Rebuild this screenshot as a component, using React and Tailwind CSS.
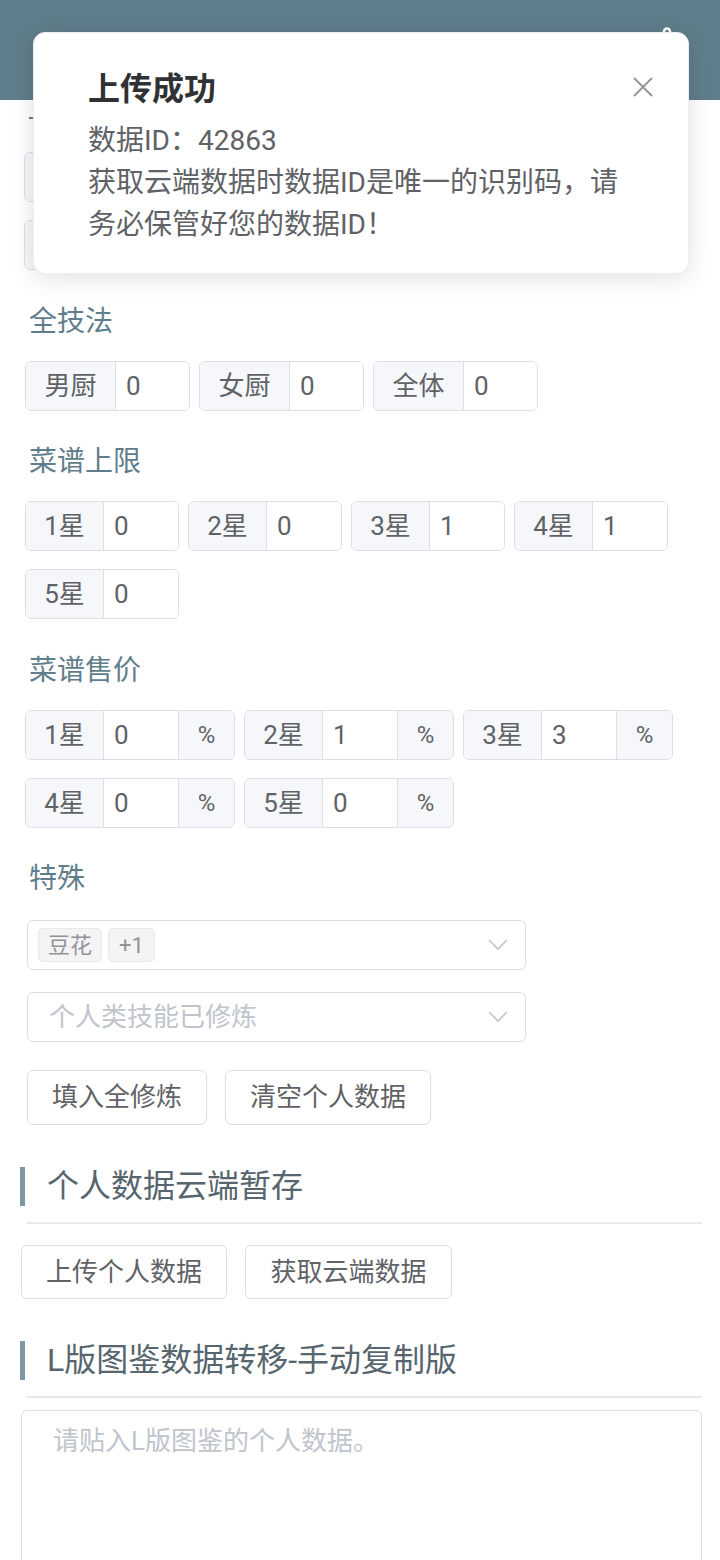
import React from 'react';
import { Settings } from 'lucide-react';

const Group = ({ label, value, suffix, lw = 'w-[78px]', vw = 'w-[74px]' }) => (
    <div className="flex h-[50px] border border-[#dcdfe6] rounded-[6px] overflow-hidden text-[26px] text-[#606266]">
        <div className={`${lw} flex items-center justify-center bg-[#f5f7fa] border-r border-[#dcdfe6]`}>{label}</div>
        <div className={`${vw} flex items-center pl-[10px] bg-white`}>{value}</div>
        {suffix && <div className="w-[56px] flex items-center justify-center bg-[#f5f7fa] border-l border-[#dcdfe6] text-[24px]">{suffix}</div>}
    </div>
);

const Label = ({ children, mb = 'mb-[19px]' }) => (
    <div className={`h-[40px] leading-[40px] text-[28px] text-[#607d8b] ml-[9px] ${mb}`}>{children}</div>
);

const Btn = ({ children }) => (
    <button className="h-[55px] px-[24px] border border-[#dcdfe6] rounded-[6px] bg-white text-[26px] text-[#606266]">{children}</button>
);

const Chevron = () => (
    <svg width="22" height="14" viewBox="0 0 22 14" className="text-[#c0c4cc]">
        <polyline points="2,2 11,11 20,2" fill="none" stroke="currentColor" strokeWidth="1.6" />
    </svg>
);

const Heading = ({ children }) => (
    <div>
        <div className="flex items-center h-[40px]">
            <div className="w-[5px] h-[39px] bg-[#7f97a3]" />
            <div className="ml-[22px] text-[32px] text-[#56656e] leading-[40px]">{children}</div>
        </div>
        <div className="ml-[7px] mt-[16px] h-[2px] bg-[#e6e9ed]" />
    </div>
);

const App = () => {
    const limits = [['1星', '0'], ['2星', '0'], ['3星', '1'], ['4星', '1'], ['5星', '0']];
    const prices = [['1星', '0'], ['2星', '1'], ['3星', '3'], ['4星', '0'], ['5星', '0']];

    return (
        <div className="relative w-[720px] min-h-[1560px] bg-white overflow-hidden font-['Roboto','Noto_Sans_CJK_SC',sans-serif]">
            <div className="h-[100px] bg-[#607d8b] flex justify-end items-start pr-[38px] pt-[26px]">
                <Settings size={30} className="text-white" />
            </div>

            <div className="pl-[20px] pr-[18px]">
                {/* rows under the notice, only their left edges show */}
                <div className="h-[36px] mb-[16px] ml-[9px] flex items-center">
                    <div className="w-[4px] h-[2px] bg-[#607d8b]" />
                </div>
                <div className="flex flex-col items-start gap-y-[18px] ml-[4px]">
                    <Group label="" value="" lw="w-[90px]" vw="w-[73px]" />
                    <Group label="" value="" lw="w-[90px]" vw="w-[73px]" />
                </div>

                <div className="mt-[32px]">
                    <Label>全技法</Label>
                    <div className="flex flex-wrap gap-x-[9px] gap-y-[18px] ml-[5px]">
                        <Group label="男厨" value="0" lw="w-[90px]" vw="w-[73px]" />
                        <Group label="女厨" value="0" lw="w-[90px]" vw="w-[73px]" />
                        <Group label="全体" value="0" lw="w-[90px]" vw="w-[73px]" />
                    </div>
                </div>

                <div className="mt-[31px]">
                    <Label>菜谱上限</Label>
                    <div className="flex flex-wrap gap-x-[9px] gap-y-[18px] ml-[5px] w-[660px]">
                        {limits.map(([l, v]) => <Group key={l} label={l} value={v} />)}
                    </div>
                </div>

                <div className="mt-[32px]">
                    <Label>菜谱售价</Label>
                    <div className="flex flex-wrap gap-x-[9px] gap-y-[18px] ml-[5px] w-[660px]">
                        {prices.map(([l, v]) => <Group key={l} label={l} value={v} suffix="%" />)}
                    </div>
                </div>

                <div className="mt-[31px]">
                    <Label mb="mb-[21px]">特殊</Label>
                    <div className="ml-[7px] w-[499px] h-[50px] border border-[#dcdfe6] rounded-[6px] flex items-center pl-[10px] pr-[16px]">
                        <span className="h-[34px] px-[9px] flex items-center rounded-[5px] bg-[#f4f4f5] border border-[#e9e9eb] text-[22px] text-[#909399]">豆花</span>
                        <span className="ml-[6px] h-[34px] px-[10px] flex items-center rounded-[5px] bg-[#f4f4f5] border border-[#e9e9eb] text-[22px] text-[#909399]">+1</span>
                        <div className="ml-auto"><Chevron /></div>
                    </div>
                    <div className="mt-[22px] ml-[7px] w-[499px] h-[50px] border border-[#dcdfe6] rounded-[6px] flex items-center pl-[21px] pr-[16px]">
                        <span className="text-[26px] text-[#c0c4cc]">个人类技能已修炼</span>
                        <div className="ml-auto"><Chevron /></div>
                    </div>
                    <div className="mt-[28px] ml-[7px] flex gap-[18px]">
                        <Btn>填入全修炼</Btn>
                        <Btn>清空个人数据</Btn>
                    </div>
                </div>

                <div className="mt-[41px]">
                    <Heading>个人数据云端暂存</Heading>
                    <div className="mt-[21px] ml-[1px] flex gap-[18px]">
                        <button className="h-[54px] w-[206px] border border-[#dcdfe6] rounded-[6px] bg-white text-[26px] text-[#606266]">上传个人数据</button>
                        <button className="h-[54px] w-[207px] border border-[#dcdfe6] rounded-[6px] bg-white text-[26px] text-[#606266]">获取云端数据</button>
                    </div>
                </div>

                <div className="mt-[41px]">
                    <Heading>L版图鉴数据转移-手动复制版</Heading>
                    <div className="mt-[12px] ml-[1px] h-[220px] border border-[#dcdfe6] rounded-[6px] px-[31px] py-[12px]">
                        <div className="text-[26px] leading-[36px] text-[#c0c4cc]">请贴入L版图鉴的个人数据。</div>
                    </div>
                </div>
            </div>

            {/* notification */}
            <div className="absolute left-[33px] top-[32px] w-[656px] h-[242px] bg-white rounded-[12px] border border-[#ebeef5] shadow-[0_4px_24px_rgba(0,0,0,0.12)] pl-[54px] pt-[36px]">
                <div className="text-[32px] leading-[40px] font-bold text-[#303133]">上传成功</div>
                <div className="mt-[11px] w-[545px] text-[28px] leading-[42px] text-[#606266]">
                    <p>数据ID：42863</p>
                    <p>获取云端数据时数据ID是唯一的识别码，请务必保管好您的数据ID！</p>
                </div>
                <svg width="22" height="22" viewBox="0 0 22 22" className="absolute left-[598px] top-[43px] text-[#909399]">
                    <path d="M2 2L20 20M20 2L2 20" stroke="currentColor" strokeWidth="1.8" fill="none" />
                </svg>
            </div>
        </div>
    );
};

export default App;
